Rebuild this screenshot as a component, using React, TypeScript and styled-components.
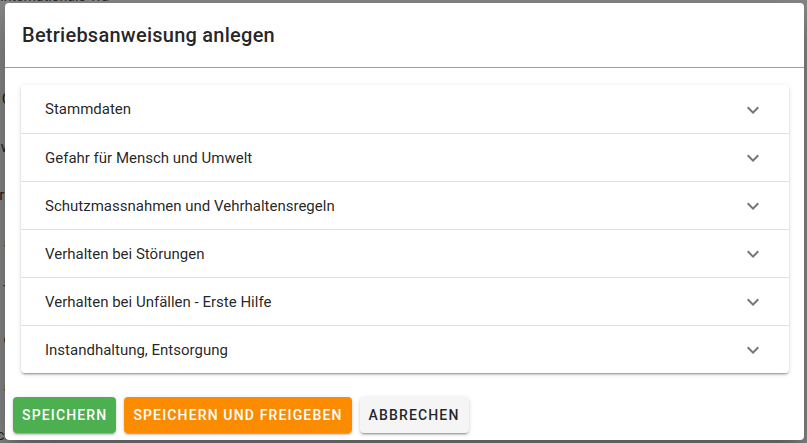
import React from "react"
import styled, { createGlobalStyle } from "styled-components"

const GlobalStyle = createGlobalStyle`
  html, body {
    margin: 0;
    padding: 0;
    width: 807px;
    height: 443px;
    overflow: hidden;
    background: #ffffff;
    font-family: Roboto, "Liberation Sans", sans-serif;
  }
`

const Page = styled.div`
  position: relative;
  width: 807px;
  height: 443px;
  overflow: hidden;
  background: #fafafa;
`

const PageTop = styled.div`
  height: 11px;
  margin-top: -8px;
  overflow: hidden;
  font-size: 14px;
  line-height: 14px;
  color: #333;
  display: flex;
  align-items: flex-end;
`

const PageRows = styled.div`
  display: flex;
  flex-direction: column;
  padding-top: 72px;
`

const PageRow = styled.div<{ $color?: string }>`
  height: 48px;
  width: 12px;
  display: flex;
  justify-content: flex-end;
  align-items: center;
  overflow: hidden;
  white-space: nowrap;
  font-size: 15px;
  color: ${p => p.$color ?? "#222"};
`

const Overlay = styled.div`
  position: absolute;
  inset: 0;
  background: rgba(33, 33, 33, 0.52);
  display: flex;
  align-items: flex-start;
  padding: 3px 0 0 5px;
`

const Dialog = styled.div`
  width: 799px;
  height: 437px;
  background: #ffffff;
  border-radius: 4px;
  box-shadow: 0 11px 15px -7px rgba(0, 0, 0, 0.2), 0 24px 38px 3px rgba(0, 0, 0, 0.14),
    0 9px 46px 8px rgba(0, 0, 0, 0.12);
  display: flex;
  flex-direction: column;
  overflow: hidden;
`

const Title = styled.div`
  height: 64px;
  display: flex;
  align-items: center;
  padding: 0 17px;
  font-size: 20px;
  font-weight: 500;
  letter-spacing: 0.0125em;
  color: rgba(0, 0, 0, 0.87);
  border-bottom: 1px solid rgba(0, 0, 0, 0.38);
`

const Content = styled.div`
  padding: 17px 15px 0 16px;
`

const Panels = styled.div`
  border-radius: 4px;
  background: #ffffff;
  box-shadow: 0 3px 1px -2px rgba(0, 0, 0, 0.2), 0 2px 2px 0 rgba(0, 0, 0, 0.14),
    0 1px 5px 0 rgba(0, 0, 0, 0.12);
  display: flex;
  flex-direction: column;
`

const PanelHeader = styled.div`
  height: 48px;
  box-sizing: border-box;
  display: flex;
  align-items: center;
  justify-content: space-between;
  padding: 0 24px;
  font-size: 15px;
  color: rgba(0, 0, 0, 0.87);
  & + & {
    border-top: 1px solid rgba(0, 0, 0, 0.12);
  }
`

const Chevron = styled.svg`
  width: 24px;
  height: 24px;
  fill: rgba(0, 0, 0, 0.54);
  margin-top: 1px;
`

const Actions = styled.div`
  display: flex;
  gap: 8px;
  padding: 24px 8px 0 8px;
`

const Button = styled.button<{ $bg: string; $fg: string }>`
  height: 36px;
  padding: 0 9px;
  border: none;
  border-radius: 4px;
  background: ${p => p.$bg};
  color: ${p => p.$fg};
  font-family: Roboto, "Liberation Sans", sans-serif;
  font-size: 14px;
  font-weight: 500;
  letter-spacing: 1.15px;
  text-transform: uppercase;
  box-shadow: 0 3px 1px -2px rgba(0, 0, 0, 0.2), 0 2px 2px 0 rgba(0, 0, 0, 0.14),
    0 1px 5px 0 rgba(0, 0, 0, 0.12);
  cursor: pointer;
`

const panels = [
  "Stammdaten",
  "Gefahr für Mensch und Umwelt",
  "Schutzmassnahmen und Vehrhaltensregeln",
  "Verhalten bei Störungen",
  "Verhalten bei Unfällen - Erste Hilfe",
  "Instandhaltung, Entsorgung",
]

const behind = [
  { t: "G" },
  { t: "w" },
  { t: "rs" },
  { t: "ä" },
  { t: "T", c: "#6a3c08" },
  { t: "o" },
  { t: "a" },
  { t: "cs" },
]

const ChevronDown = () => (
  <Chevron viewBox="0 0 24 24">
    <path d="M7.41,8.58L12,13.17L16.59,8.58L18,10L12,16L6,10L7.41,8.58Z" />
  </Chevron>
)

export default function App() {
  return (
    <Page>
      <GlobalStyle />
      <PageTop>Internationale Tra</PageTop>
      <PageRows>
        {behind.map((b, i) => (
          <PageRow key={i} $color={b.c}>
            {b.t}
          </PageRow>
        ))}
      </PageRows>
      <Overlay>
        <Dialog>
          <Title>Betriebsanweisung anlegen</Title>
          <Content>
            <Panels>
              {panels.map(p => (
                <PanelHeader key={p}>
                  {p}
                  <ChevronDown />
                </PanelHeader>
              ))}
            </Panels>
          </Content>
          <Actions>
            <Button $bg="#4caf50" $fg="#ffffff">Speichern</Button>
            <Button $bg="#fb8c00" $fg="#ffffff">Speichern und freigeben</Button>
            <Button $bg="#f5f5f5" $fg="rgba(0,0,0,0.87)">Abbrechen</Button>
          </Actions>
        </Dialog>
      </Overlay>
    </Page>
  )
}
